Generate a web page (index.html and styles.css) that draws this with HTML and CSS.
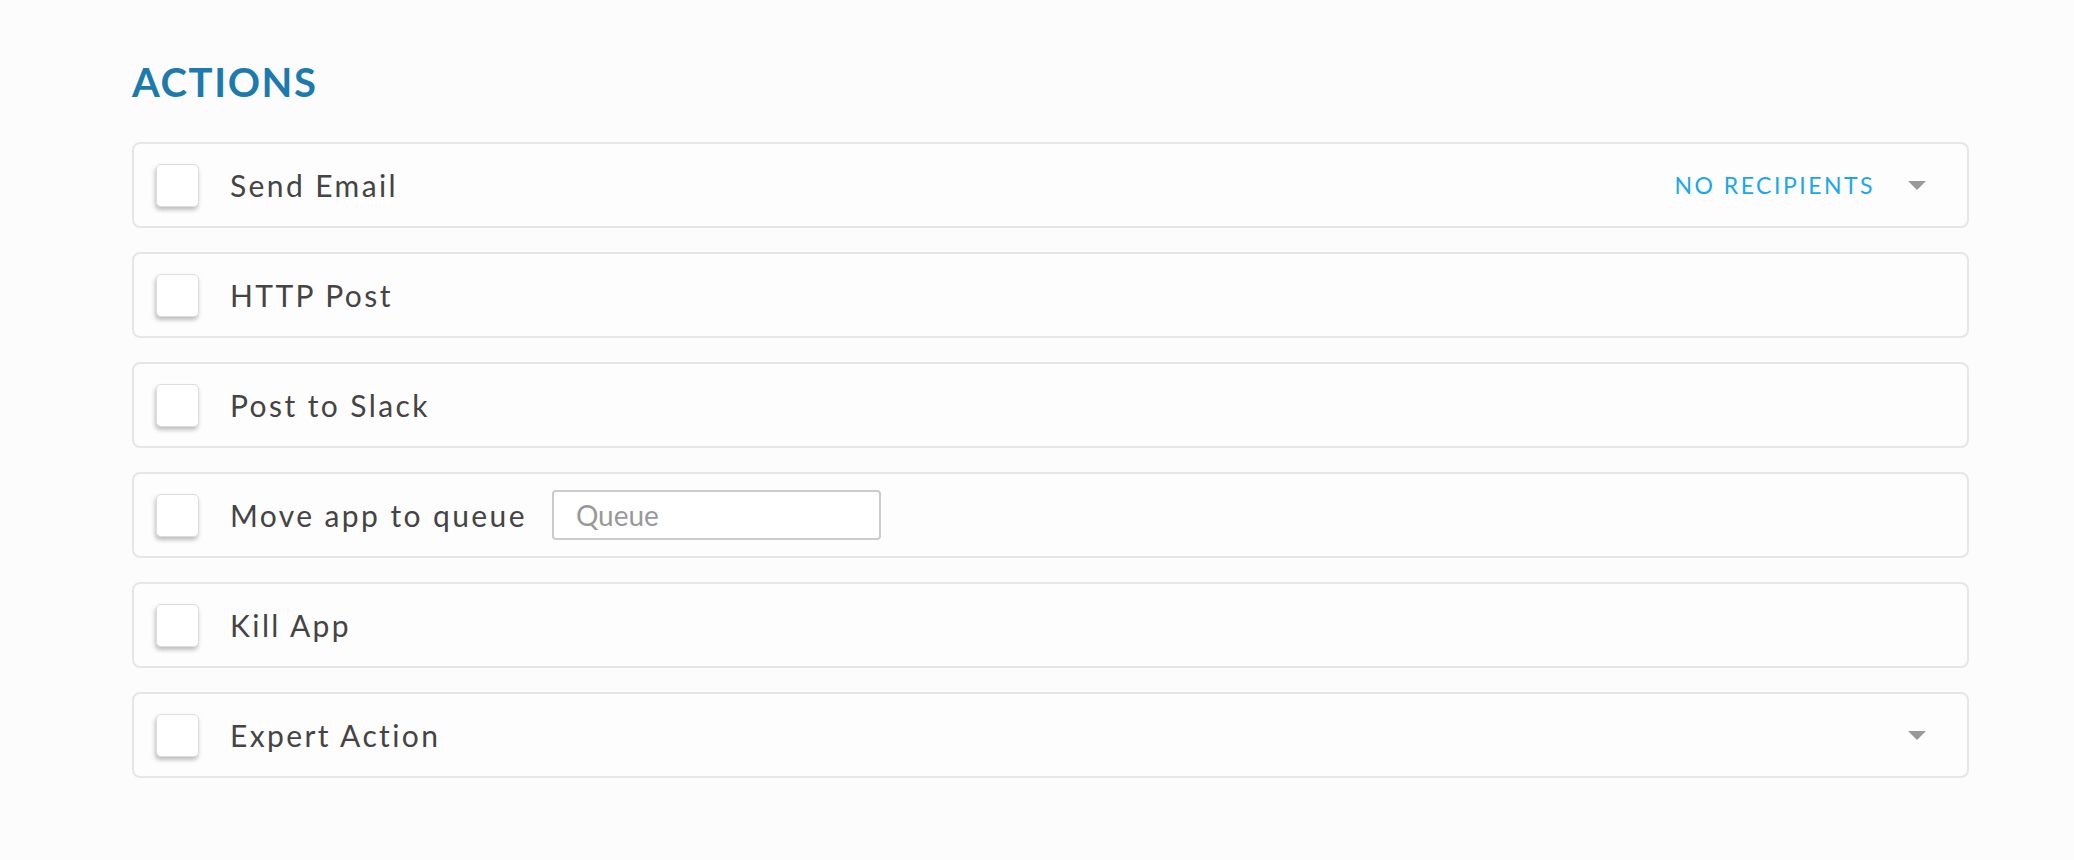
FILE: index.html
```html
<!DOCTYPE html>
<html lang="en">
<head>
    <meta charset="UTF-8">
    <title>Actions</title>
    <link rel="stylesheet" href="styles.css">
</head>
<body>
    <div class="actions">
        <h2 class="section-title">ACTIONS</h2>

        <div class="action-row">
            <span class="check"></span>
            <span class="action-label">Send Email</span>
            <span class="spacer"></span>
            <span class="recipients">NO RECIPIENTS</span>
            <span class="caret"></span>
        </div>

        <div class="action-row">
            <span class="check"></span>
            <span class="action-label">HTTP Post</span>
        </div>

        <div class="action-row">
            <span class="check"></span>
            <span class="action-label">Post to Slack</span>
        </div>

        <div class="action-row">
            <span class="check"></span>
            <span class="action-label">Move app to queue</span>
            <input class="queue-input" type="text" placeholder="Queue">
        </div>

        <div class="action-row">
            <span class="check"></span>
            <span class="action-label">Kill App</span>
        </div>

        <div class="action-row">
            <span class="check"></span>
            <span class="action-label">Expert Action</span>
            <span class="spacer"></span>
            <span class="caret"></span>
        </div>
    </div>
</body>
</html>
```

FILE: styles.css
```css
body {
    margin: 0;
    background-color: #fcfcfc;
    font-family: Lato, "Open Sans", sans-serif;
    color: #444;
}
.actions {
    padding: 58px 105px 40px 132px;
    display: flex;
    flex-direction: column;
    gap: 24px;
}
.section-title {
    margin: 0 0 12px 0;
    font-size: 40px;
    line-height: 48px;
    font-weight: 700;
    color: #1d7aad;
    letter-spacing: 1.6px;
}
.action-row {
    height: 82px;
    display: flex;
    align-items: center;
    padding: 0 41px 0 22px;
    border: 2px solid #e6e6e6;
    border-radius: 8px;
    background-color: #fdfdfd;
}
.check {
    width: 41px;
    height: 41px;
    flex: none;
    background-color: #fff;
    border: 1px solid #ddd;
    border-radius: 5px;
    box-shadow: -1px 3px 4px rgba(0, 0, 0, 0.25);
    margin-right: 31px;
}
.action-label {
    font-size: 30px;
    letter-spacing: 2.4px;
    color: #444;
}
.spacer {
    flex: 1;
}
.recipients {
    font-size: 23px;
    letter-spacing: 2.5px;
    color: #1aa7ec;
    margin-right: 33px;
}
.caret {
    width: 0;
    height: 0;
    border-left: 9px solid transparent;
    border-right: 9px solid transparent;
    border-top: 9px solid #999;
}
.queue-input {
    margin-left: 25px;
    width: 329px;
    height: 50px;
    box-sizing: border-box;
    padding: 0 22px;
    border: 2px solid #ccc;
    border-radius: 4px;
    background-color: #fff;
    font-family: Lato, "Open Sans", sans-serif;
    font-size: 28px;
    color: #444;
}
.queue-input::placeholder {
    color: #999;
}
```
